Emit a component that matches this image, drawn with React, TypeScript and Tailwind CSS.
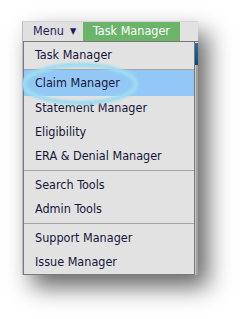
import React from 'react';

const groups: string[][] = [
  ['Claim Manager', 'Statement Manager', 'Eligibility', 'ERA & Denial Manager'],
  ['Search Tools', 'Admin Tools'],
  ['Support Manager', 'Issue Manager'],
];

const font = { fontFamily: '"DejaVu Sans Condensed", "DejaVu Sans", sans-serif' };

const App: React.FC = () => {
  return (
    <div className="relative w-[240px] h-[319px] bg-white overflow-hidden" style={font}>
      <div className="ml-[22px] mt-[21px] w-[176px] border-l border-[#b4bcc4] shadow-[10px_12px_22px_rgba(0,0,0,0.6)] bg-[#e2e2e2]">
        {/* Top bar */}
        <div className="flex h-[21px] border-t border-[#d4d4d4] border-b border-b-[#777777] bg-[#e0e0e0] text-[12.5px]">
          <div className="w-[60px] flex items-center pl-[10px] gap-[6px] text-[#1e1e5a]">
            <span>Menu</span>
            <span className="text-[9px]">▼</span>
          </div>
          <div className="w-[97px] flex items-center justify-center bg-[#6ab56a] text-white">Task Manager</div>
          <div className="flex-1 bg-[#e2e2e2]" />
        </div>

        {/* Body */}
        <div className="flex">
          <div className="w-[172px] border-l border-r border-b border-[#7a7a7a] bg-[#e2e2e2] text-[12.5px] text-[#16163a]">
            <div className="h-[27px] flex items-center pl-[11px]">Task Manager</div>
            {groups.map((items, gi) => (
              <div
                key={gi}
                className={
                  gi === 0
                    ? 'border-t border-[#a4a4a4] pb-[2px]'
                    : gi === groups.length - 1
                      ? 'border-t border-[#a4a4a4] pt-[2px]'
                      : 'border-t border-[#a4a4a4] pt-[2px] pb-[2px]'
                }
              >
                {items.map((item) => (
                  <div
                    key={item}
                    className={
                      item === 'Claim Manager'
                        ? 'h-[26px] flex items-center pl-[11px] bg-[#93c8f6]'
                        : 'h-[24px] flex items-center pl-[11px]'
                    }
                  >
                    {item}
                  </div>
                ))}
              </div>
            ))}
          </div>
          <div className="flex-1 flex flex-col">
            <div className="h-[22px] mt-[1px] bg-gradient-to-b from-[#2a6fa6] to-[#0f4776]" />
            <div className="flex-1 bg-[#a0a0a0] border-l border-[#c8c8c8]" />
          </div>
        </div>
      </div>

      {/* annotation oval */}
      <svg className="absolute left-0 top-0 pointer-events-none" width="240" height="319">
        <defs>
          <filter id="soft" x="-20%" y="-40%" width="140%" height="180%">
            <feGaussianBlur stdDeviation="0.8" />
          </filter>
        </defs>
        <ellipse cx="80" cy="84" rx="56" ry="19" fill="none" stroke="#9edcf0" strokeWidth="4.5" filter="url(#soft)" />
      </svg>
    </div>
  );
};

export default App;
